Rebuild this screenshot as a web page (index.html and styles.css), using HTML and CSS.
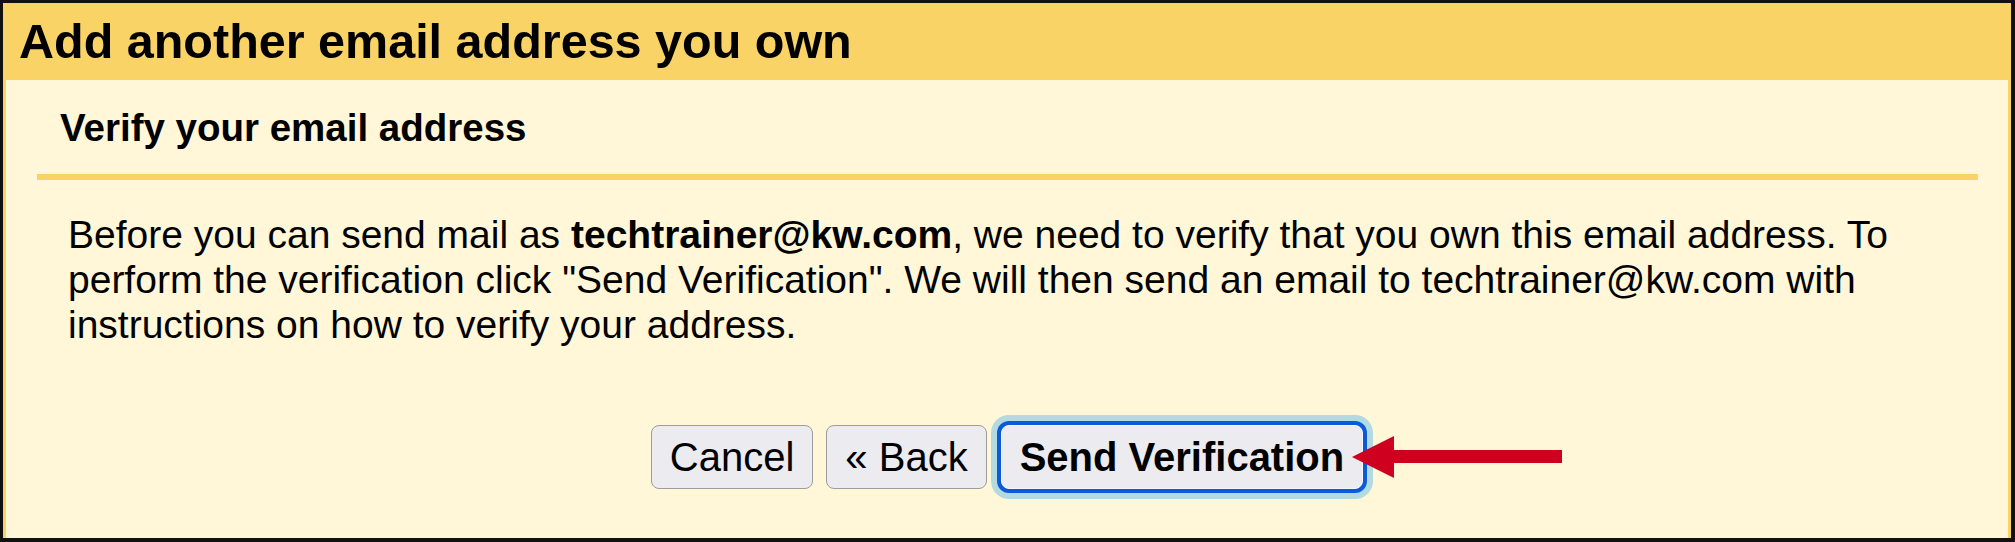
FILE: index.html
```html
<!DOCTYPE html>
<html lang="en">
<head>
<meta charset="utf-8">
<title>Add another email address you own</title>
<link rel="stylesheet" href="styles.css">
</head>
<body>
<div class="frame">
  <div class="title-bar">Add another email address you own</div>
  <div class="content">
    <h2 class="subheading">Verify your email address</h2>
    <div class="separator"></div>
    <p class="message">Before you can send mail as <b>techtrainer@kw.com</b>, we need to verify that you own this email address. To<br>perform the verification click "Send Verification". We will then send an email to techtrainer@kw.com with<br>instructions on how to verify your address.</p>
    <div class="actions">
      <button class="btn" type="button">Cancel</button>
      <button class="btn" type="button">&laquo; Back</button>
      <div class="primary-wrap">
        <button class="btn btn-primary" type="button">Send Verification</button>
        <svg class="arrow" width="210" height="42" viewBox="0 0 210 42" aria-hidden="true">
          <polygon points="0,21 42,0 42,14 210,14 210,27 42,27 42,42" fill="#cf001f"/>
        </svg>
      </div>
    </div>
  </div>
</div>
</body>
</html>
```
FILE: styles.css
```css
html, body {
  margin: 0;
  padding: 0;
}
body {
  width: 2015px;
  height: 542px;
  overflow: hidden;
  font-family: "Liberation Sans", Arial, sans-serif;
  color: #000;
  background: #fff;
}
.frame {
  box-sizing: border-box;
  width: 2015px;
  height: 542px;
  border-style: solid;
  border-color: #111;
  border-width: 3px 4px 4px 3px;
  display: flex;
  flex-direction: column;
}
.title-bar {
  height: 77px;
  line-height: 77px;
  background: #fad366;
  font-size: 48.5px;
  font-weight: bold;
  padding-left: 16px;
  white-space: nowrap;
}
.content {
  flex: 1;
  background: #fff7d8;
  border-left: 3px solid #fad366;
  border-right: 3px solid #fad366;
  padding-top: 26px;
}
.subheading {
  margin: 0 0 0 54px;
  font-size: 38.5px;
  line-height: 44px;
  font-weight: bold;
}
.separator {
  height: 6px;
  margin: 24px 30px 0 31px;
  background: #f9d366;
}
.message {
  margin: 32px 0 0 62px;
  font-size: 39px;
  line-height: 45px;
  white-space: nowrap;
}
.message b {
  font-weight: bold;
}
.actions {
  margin-top: 78px;
  display: flex;
  justify-content: center;
  align-items: center;
  gap: 13px;
}
.btn {
  box-sizing: border-box;
  height: 64px;
  padding: 0 18px;
  border: 1px solid #9c9c9f;
  border-radius: 8px;
  background: #ebebf0;
  font-family: "Liberation Sans", Arial, sans-serif;
  font-size: 40px;
  line-height: 62px;
  color: #000;
  margin: 0;
}
.primary-wrap {
  position: relative;
  margin-left: 1px;
}
.btn-primary {
  display: block;
  font-weight: bold;
  border-color: #f6f6fb;
  box-shadow: 0 0 0 4px #0b5bd9, 0 0 0 10px #b3dae1;
}
.arrow {
  position: absolute;
  left: calc(100% - 11px);
  top: 11px;
  display: block;
}
```
